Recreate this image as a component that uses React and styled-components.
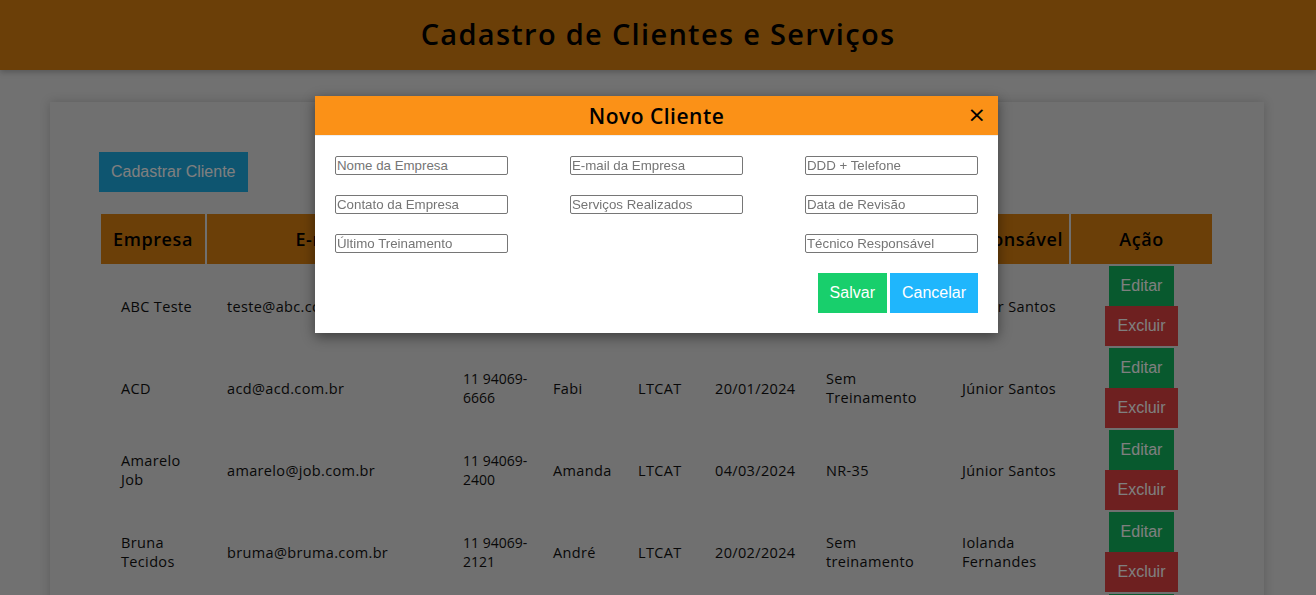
import React from 'react'
import styled, { createGlobalStyle } from 'styled-components'

const GlobalStyle = createGlobalStyle`
  body {
    margin: 0;
    background: #e2e2e2;
    font-family: "Open Sans", "Liberation Sans", sans-serif;
    color: #1a1a1a;
    overflow: hidden;
  }
`;

const Header = styled.header`
  height: 70px;
  padding-bottom: 3px;
  box-sizing: border-box;
  background: #d77e11;
  display: flex;
  align-items: center;
  justify-content: center;
  box-shadow: 0 2px 6px rgba(0, 0, 0, 0.25);
`;

const PageTitle = styled.h1`
  margin: 0;
  font-size: 29px;
  font-weight: 600;
  color: #000;
  letter-spacing: 1.3px;
`;

const Card = styled.main`
  margin: 32px 52px 0 50px;
  padding: 50px 50px 40px 49px;
  background: #e0e0e0;
  box-shadow: 0 0 10px rgba(0, 0, 0, 0.18);
`;

const Button = styled.button`
  border: none;
  height: 40px;
  padding: 0 ${p => p.$pad || 12}px;
  font-family: "Liberation Sans", Arial, sans-serif;
  font-size: 16px;
  color: #fff;
  background: ${p => p.$bg};
  cursor: pointer;
`;

const Table = styled.table`
  margin-top: 20px;
  border-spacing: 2px;
  width: 1115px;
  table-layout: fixed;
`;

const Th = styled.th`
  height: 50px;
  padding: 0;
  background: #d77e11;
  font-size: 18px;
  font-weight: 600;
  letter-spacing: 0.6px;
  color: #000;
  width: ${p => p.$w}px;
`;

const Td = styled.td`
  padding: 0 0 0 20px;
  font-size: ${p => (p.$tight ? 14 : 14.5)}px;
  letter-spacing: ${p => (p.$tight ? 0 : 0.35)}px;
  line-height: 19px;
  color: #111;
  height: 80px;
`;

const ActionCell = styled.td`
  padding: 0;
  text-align: center;
`;

const ActionStack = styled.div`
  display: flex;
  flex-direction: column;
  align-items: center;
`;

const Overlay = styled.div`
  position: fixed;
  inset: 0;
  background: rgba(0, 0, 0, 0.5);
`;

const Modal = styled.div`
  position: fixed;
  top: 96px;
  left: 315px;
  width: 683px;
  background: #fff;
  box-shadow: 0 4px 12px rgba(0, 0, 0, 0.45);
`;

const ModalHeader = styled.div`
  position: relative;
  height: 40px;
  background: #fb9117;
  display: flex;
  align-items: center;
  justify-content: center;
  border-bottom: 1px solid #eee;
  box-sizing: border-box;
`;

const ModalTitle = styled.h2`
  margin: 0;
  font-size: 21px;
  font-weight: 600;
  color: #000;
  letter-spacing: 0.5px;
`;

const Close = styled.span`
  position: absolute;
  right: 12px;
  top: 8px;
  font-family: "DejaVu Sans", sans-serif;
  font-size: 22px;
  line-height: 22px;
  color: #000;
  cursor: pointer;
`;

const ModalBody = styled.div`
  padding: 20px;
`;

const FieldGrid = styled.div`
  display: grid;
  grid-template-columns: repeat(3, 173px);
  justify-content: space-between;
  row-gap: 20px;
`;

const Input = styled.input`
  box-sizing: border-box;
  width: 173px;
  height: 19px;
  margin: 0;
  padding: 0 1px;
  border: 1px solid #767676;
  border-radius: 2px;
  font-family: "Liberation Sans", Arial, sans-serif;
  font-size: 13.3px;
  grid-column: ${p => p.$col || 'auto'};

  &::placeholder {
    color: #757575;
  }
`;

const Footer = styled.div`
  margin-top: 20px;
  display: flex;
  justify-content: flex-end;
  gap: 3px;
`;

const columns = [
  { label: 'Empresa', w: 104 },
  { label: 'E-mail', w: 234 },
  { label: 'Telefone', w: 88 },
  { label: 'Contato', w: 83 },
  { label: 'Serviço', w: 75 },
  { label: 'Revisão', w: 109 },
  { label: 'Treinamento', w: 134 },
  { label: 'Responsável', w: 127 },
  { label: 'Ação', w: 141 },
]

const clients = [
  ['ABC Teste', 'teste@abc.com.br', '11 94069-1234', 'Carlos', 'LTCAT', '10/01/2024', 'NR-10', 'Júnior Santos'],
  ['ACD', 'acd@acd.com.br', '11 94069-6666', 'Fabi', 'LTCAT', '20/01/2024', 'Sem Treinamento', 'Júnior Santos'],
  ['Amarelo Job', 'amarelo@job.com.br', '11 94069-2400', 'Amanda', 'LTCAT', '04/03/2024', 'NR-35', 'Júnior Santos'],
  ['Bruna Tecidos', 'bruma@bruma.com.br', '11 94069-2121', 'André', 'LTCAT', '20/02/2024', 'Sem treinamento', 'Iolanda Fernandes'],
  ['Casa Azul', 'casa@azul.com.br', '11 94069-3030', 'Paula', 'LTCAT', '12/03/2024', 'NR-35', 'Júnior Santos'],
]

export default function App() {
  return (
    <>
      <GlobalStyle />
      <Header>
        <PageTitle>Cadastro de Clientes e Serviços</PageTitle>
      </Header>
      <Card>
        <Button $bg="#1caae0" $pad={12}>Cadastrar Cliente</Button>
        <Table>
          <thead>
            <tr>
              {columns.map(c => <Th key={c.label} $w={c.w}>{c.label}</Th>)}
            </tr>
          </thead>
          <tbody>
            {clients.map(row => (
              <tr key={row[0]}>
                {row.map((v, i) => <Td key={i} $tight={i === 2}>{v}</Td>)}
                <ActionCell>
                  <ActionStack>
                    <Button $bg="#10b25c">Editar</Button>
                    <Button $bg="#dc4040">Excluir</Button>
                  </ActionStack>
                </ActionCell>
              </tr>
            ))}
          </tbody>
        </Table>
      </Card>
      <Overlay />
      <Modal>
        <ModalHeader>
          <ModalTitle>Novo Cliente</ModalTitle>
          <Close>×</Close>
        </ModalHeader>
        <ModalBody>
          <FieldGrid>
            <Input placeholder="Nome da Empresa" />
            <Input placeholder="E-mail da Empresa" />
            <Input placeholder="DDD + Telefone" />
            <Input placeholder="Contato da Empresa" />
            <Input placeholder="Serviços Realizados" />
            <Input placeholder="Data de Revisão" />
            <Input placeholder="Último Treinamento" />
            <Input placeholder="Técnico Responsável" $col={3} />
          </FieldGrid>
          <Footer>
            <Button $bg="#18cf6c">Salvar</Button>
            <Button $bg="#1fb6fc">Cancelar</Button>
          </Footer>
        </ModalBody>
      </Modal>
    </>
  )
}
